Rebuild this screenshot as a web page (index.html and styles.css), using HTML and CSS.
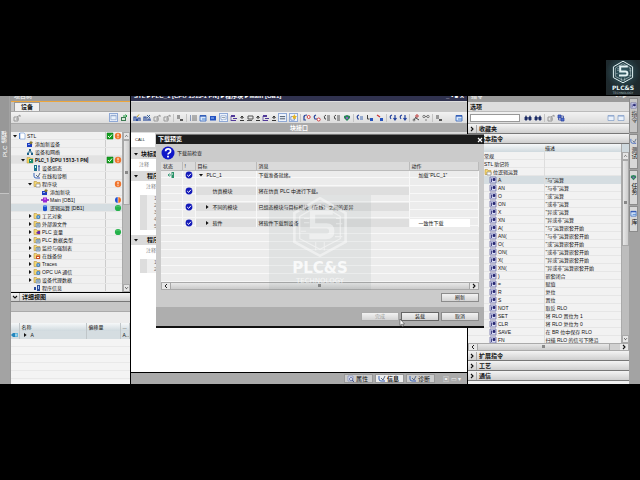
FILE: index.html
```html
<!DOCTYPE html>
<html lang="zh-CN">
<head>
<meta charset="utf-8">
<title>PLC 编程</title>
<link rel="stylesheet" href="styles.css">
</head>
<body>
<svg class="defs" aria-hidden="true">
  <symbol id="arrow-d" viewBox="0 0 6 6"><path d="M1 2h4L3 4.6z" fill="#111"/></symbol>
  <symbol id="arrow-r" viewBox="0 0 6 6"><path d="M2 1v4l2.6-2z" fill="#111"/></symbol>
  <symbol id="chev-r" viewBox="0 0 6 6"><path d="M2 1l2 2-2 2" fill="none" stroke="#111" stroke-width="1.1"/></symbol>
  <symbol id="chev-l" viewBox="0 0 6 6"><path d="M4 1L2 3l2 2" fill="none" stroke="#222"/></symbol>
  <symbol id="chev-d" viewBox="0 0 6 6"><path d="M1 2l2 2 2-2" fill="none" stroke="#111" stroke-width="1.1"/></symbol>
  <symbol id="chev-u" viewBox="0 0 6 6"><path d="M1 4l2-2 2 2" fill="none" stroke="#333"/></symbol>
  <symbol id="ok" viewBox="0 0 8 8"><path d="M1 1h6v6H1z" fill="#14a01e" stroke="#0b7614" stroke-width=".5"/><path d="M2 4l1.5 1.6L6 2.5" fill="none" stroke="#fff"/></symbol>
  <symbol id="warn" viewBox="0 0 8 8"><circle cx="4" cy="4" r="3.2" fill="#f0742c"/><path d="M4 1.8v2.6M4 5.2v1" stroke="#fff"/></symbol>
  <symbol id="green" viewBox="0 0 8 8"><circle cx="4" cy="4" r="3.1" fill="#25b24b"/><path d="M2 3q2-2 4 0" stroke="#6bd585" fill="none" stroke-width=".6"/></symbol>
  <symbol id="half" viewBox="0 0 8 8"><path d="M4 1a3 3 0 0 0 0 6z" fill="#2050d0"/><path d="M4 1a3 3 0 0 1 0 6z" fill="#f07022"/><path d="M4 1v6" stroke="#fff" stroke-width=".6"/></symbol>
  <symbol id="doc" viewBox="0 0 8 8"><path d="M2 1h4l1 1v5H2z" fill="#fff" stroke="#7ea2d8" stroke-width=".7"/><path d="M1.5 1v6" stroke="#5a88cc"/></symbol>
  <symbol id="addnew" viewBox="0 0 8 8"><path d="M1 3h5v4H1z" fill="#1c3cc0"/><path d="M2 4h2v1H2z" fill="#8fb0ff"/><path d="M5 .5l.6 1.3 1.5.2-1 1 .2 1.4L5 3.8 3.8 4.400 4 3l-1-1 1.400-.2z" fill="#8a7a34"/></symbol>
  <symbol id="net" viewBox="0 0 8 8"><path d="M3 1h2v2H3zM1 5h2v2H1zM5 5h2v2H5z" fill="#1b6088"/><path d="M4 3v1M2 5V4h4v1" fill="none" stroke="#1b6088" stroke-width=".8"/></symbol>
  <symbol id="plc" viewBox="0 0 8 8"><path d="M1 1.500h3l.5 1H7v4.500H1z" fill="#f0d060" stroke="#b99a3a" stroke-width=".5"/><path d="M3 3h4v4H3z" fill="#1b8c70"/><path d="M4 4h1v1H4z" fill="#fff"/></symbol>
  <symbol id="conf" viewBox="0 0 8 8"><path d="M1 1h3v6H1z" fill="#1b708c"/><path d="M2 2h1v2H2z" fill="#bfe"/><path d="M5 2h2M6 2v5" stroke="#28489b"/></symbol>
  <symbol id="diag" viewBox="0 0 8 8"><path d="M1 1v3q0 2 2 2h2" fill="none" stroke="#3c68bb"/><path d="M3 3l2 2 2-4" fill="none" stroke="#596b88"/><path d="M5 6h2" stroke="#3753bb"/></symbol>
  <symbol id="folder" viewBox="0 0 8 8"><path d="M1 1.500h2.500l.5 1h3V6.500H1z" fill="#f5d873" stroke="#b7923c" stroke-width=".6"/></symbol>
  <symbol id="f-block" viewBox="0 0 8 8"><use href="#folder"/><path d="M3 4h4v3H3z" fill="#fff" stroke="#777" stroke-width=".6"/></symbol>
  <symbol id="f-blue" viewBox="0 0 8 8"><use href="#folder"/><circle cx="5.200" cy="5" r="2" fill="#3c82c8"/><circle cx="5.200" cy="5" r=".7" fill="#def"/></symbol>
  <symbol id="f-purple" viewBox="0 0 8 8"><use href="#folder"/><path d="M3 5l2-2h2v3H5z" fill="#6728a8"/></symbol>
  <symbol id="f-grey" viewBox="0 0 8 8"><use href="#folder"/><path d="M3 3.500h4V7H3z" fill="#b8cadb" stroke="#57789a" stroke-width=".6"/><path d="M4 5h2" stroke="#385f80" stroke-width=".6"/></symbol>
  <symbol id="f-red" viewBox="0 0 8 8"><use href="#folder"/><path d="M3 3.500h4V7H3z" fill="#c8522a"/><path d="M4 5h2v1H4z" fill="#fff"/></symbol>
  <symbol id="ob" viewBox="0 0 8 8"><path d="M0 4h8" stroke="#7c18b5" stroke-width="1.500"/><path d="M2 1.500h4v5H2z" fill="#9a24d4"/><path d="M3 3h2" stroke="#e0a5f5"/></symbol>
  <symbol id="db" viewBox="0 0 8 8"><path d="M2 2q2-2 4 0v4.500q-2 1.300-4 0z" fill="#1d4fce"/><ellipse cx="4" cy="2" rx="2" ry=".8" fill="#83a9f6"/></symbol>
  <symbol id="info" viewBox="0 0 8 8"><path d="M1 3h2v3H1zM4 1h3v6H4z" fill="#2a4b9a"/><path d="M5 2h1v3H5z" fill="#a8c8f3"/></symbol>
  <symbol id="tag" viewBox="0 0 8 8"><path d="M0 4l2-2h5v4H2z" fill="#2486bd"/><path d="M4 2h3v4H4z" fill="#65b7dc"/><path d="M5 3v2" stroke="#fff" stroke-width=".7"/></symbol>
  <symbol id="inst" viewBox="0 0 8 8"><path d="M1 1h6v6H1z" fill="#dde0f5" stroke="#5c5c9c" stroke-width=".7"/><path d="M2.500 6V2.500M4 2.500h2v2H4z" fill="#272772" stroke="#272772" stroke-width=".8"/></symbol>
  <symbol id="check" viewBox="0 0 8 8"><circle cx="4" cy="4" r="3.400" fill="#151bb9"/><path d="M2.200 4l1.400 1.400L6 2.700" stroke="#fff" fill="none"/></symbol>
  <symbol id="load" viewBox="0 0 8 8"><path d="M4.500 1H7v6H4.500z" fill="#2a9268"/><path d="M1 4h3M2.500 2.500L1 4l1.500 1.500" fill="none" stroke="#44a180"/><path d="M5 3h1" stroke="#fff"/></symbol>
  <symbol id="t-out" viewBox="0 0 8 8"><path d="M1 3h5v4H1z" fill="#3d7b52"/><path d="M2 4h3v2H2z" fill="#d5e8d8"/><path d="M3 2h4M5.500 .5L7 2 5.500 3.500" fill="none" stroke="#1f9c3f"/></symbol>
  <symbol id="t-db" viewBox="0 0 8 8"><path d="M1 7V3h2v4M5 7V4h2v3M4 7V5" stroke="#2c4d9b" fill="none" stroke-width="1.200"/><path d="M4 3l2-2.500" stroke="#bb9a20"/></symbol>
  <symbol id="t-x" viewBox="0 0 8 8"><path d="M1 7V3h2v4M5 7V5h2v2" stroke="#2c4d9b" fill="none" stroke-width="1.200"/><path d="M4 1l3 3M7 1L4 4" stroke="#285593" stroke-width=".9"/></symbol>
  <symbol id="t-dim" viewBox="0 0 8 8"><path d="M1 3h4v4H1zM3 5h3M4 3l3-2v2" fill="none" stroke="#999"/></symbol>
  <symbol id="t-copy" viewBox="0 0 8 8"><path d="M1 1h3v4H1z" fill="#999"/><path d="M4 5h3v2H4z" fill="#555"/></symbol>
  <symbol id="t-lines" viewBox="0 0 8 8"><path d="M1 2h1M1 4h1M1 6h1" stroke="#2c4d8b"/><path d="M3 2h5M3 4h5M3 6h5" stroke="#555" stroke-width=".8"/></symbol>
  <symbol id="t-win" viewBox="0 0 8 8"><path d="M1 1.500h6v5.500H1z" fill="#d7e7fb" stroke="#3063bb" stroke-width=".8"/><path d="M1 2h6" stroke="#234cae" stroke-width="1.200"/><path d="M3 5h4" stroke="#4c83cc"/></symbol>
  <symbol id="t-pane" viewBox="0 0 8 8"><path d="M1 1.500h6v5H1z" fill="#e9f1fb" stroke="#8ba4cc" stroke-width=".8"/><path d="M1 2h6" stroke="#8ba4cc"/></symbol>
  <symbol id="t-fill" viewBox="0 0 8 8"><path d="M1 2h6v4.500H1z" fill="#2352c0"/><path d="M2 4h3" stroke="#9fc0ff"/></symbol>
  <symbol id="t-bubble" viewBox="0 0 8 8"><path d="M1 2h6v4H4L2 7V6H1z" fill="#fff" stroke="#698cc0" stroke-width=".7"/><path d="M2 4h4" stroke="#89a"/></symbol>
  <symbol id="t-var" viewBox="0 0 8 8"><path d="M1 1h4v2H1zM3 4h4v1H3zM1 6h5v1H1z" fill="#513999"/><path d="M1 2v5" stroke="#513999" stroke-width=".7"/></symbol>
  <symbol id="t-mon" viewBox="0 0 8 8"><path d="M2 2h5v3H2zM1 6.500h5" fill="none" stroke="#555"/></symbol>
  <symbol id="t-up" viewBox="0 0 4 8"><path d="M2 2v3M.5 4L2 2l1.500 2M0 6.500h4" fill="none" stroke="#222" stroke-width=".9"/></symbol>
  <symbol id="t-eq" viewBox="0 0 8 8"><path d="M1 3h6M1 5.500h6" stroke="#345"/></symbol>
  <symbol id="t-star" viewBox="0 0 8 8"><path d="M1 3h4v4H1z" fill="#fff" stroke="#345fa8" stroke-width=".7"/><path d="M5 0l.8 2L8 2.500 6.500 4l.2 2L5 5l-2 .8L3.500 4 2 2.500 4.200 2z" fill="#e4b323"/></symbol>
  <symbol id="t-red" viewBox="0 0 8 8"><path d="M1 3q0-2 3-2M1 2v4h2" fill="none" stroke="#223f99" stroke-width="1.200"/><circle cx="5.700" cy="3" r="1.500" fill="#fff" stroke="#cf3030" stroke-width=".9"/></symbol>
  <symbol id="t-red2" viewBox="0 0 8 8"><path d="M3 1Q0 2 2 5h2" fill="none" stroke="#223f99" stroke-width="1.200"/><circle cx="5.700" cy="5.500" r="1.500" fill="#fff" stroke="#cf3030" stroke-width=".9"/></symbol>
  <symbol id="t-call" viewBox="0 0 8 8"><path d="M3 1Q0 2 2 5h1" fill="none" stroke="#444"/><path d="M4 2h3M4 4h3M4 6h3" stroke="#555"/></symbol>
  <symbol id="t-shield" viewBox="0 0 8 8"><path d="M1 2l3-1 3 1v2L4 7 1 4z" fill="#29855a"/><path d="M3 3h2v2H3z" fill="#86b"/></symbol>
  <symbol id="t-step" viewBox="0 0 8 8"><path d="M3 1Q0 2 2 5h1" fill="none" stroke="#223f99" stroke-width="1.200"/><path d="M4 3h3M4 5h3" stroke="#456cb5"/></symbol>
  <symbol id="t-sq" viewBox="0 0 8 8"><path d="M1.500 1v4h2" fill="none" stroke="#444"/><path d="M4 4h3v3H4z" fill="#2754bd"/></symbol>
  <symbol id="t-sqr" viewBox="0 0 8 8"><path d="M1 1l3 2" stroke="#c33" stroke-width="1.300"/><path d="M4 4h3v3H4z" fill="#2754bd"/></symbol>
  <symbol id="t-in" viewBox="0 0 8 8"><path d="M3 1Q0 2 2 5" fill="none" stroke="#223f99" stroke-width="1.200"/><path d="M6 1v4M4.500 4L6 6l1.500-2" stroke="#2142a0" fill="none" stroke-width="1.200"/></symbol>
  <symbol id="t-key" viewBox="0 0 8 8"><circle cx="5" cy="2" r="1.200" fill="none" stroke="#b33"/><path d="M4 3L2 6M4 4l3 2" stroke="#444"/><circle cx="2" cy="6" r="1" fill="none" stroke="#555" stroke-width=".7"/></symbol>
  <symbol id="t-glass" viewBox="0 0 8 8"><circle cx="2" cy="2.500" r="1.200" fill="none" stroke="#555" stroke-width=".7"/><circle cx="6" cy="2.500" r="1.200" fill="none" stroke="#555" stroke-width=".7"/><path d="M3 2.500h2M3 6h2" stroke="#555" stroke-width=".7"/></symbol>
  <symbol id="t-find" viewBox="0 0 8 8"><path d="M1 6V3h2v3zM5 6V3h2v3zM3 4h2M2 3V1.500M6 3V1.500" stroke="#1d2d66" fill="#1d2d66" stroke-width=".9"/></symbol>
  <symbol id="t-prop" viewBox="0 0 8 8"><path d="M1 1h5v5H1z" fill="#e5e8f5" stroke="#7a86b8" stroke-width=".7"/><circle cx="4" cy="4" r="1.500" fill="#fff" stroke="#4c5a94" stroke-width=".8"/><path d="M5 5l2 2" stroke="#4c5a94"/></symbol>
  <symbol id="t-swap" viewBox="0 0 8 8"><path d="M1 1h3v3H1zM4 4h3v3H4z" fill="#506fd0" stroke="#263d98" stroke-width=".7"/><path d="M4 2h2.500v2M1.500 4v2H4" fill="none" stroke="#263d98" stroke-width=".7"/></symbol>
  <symbol id="hexlogo" viewBox="0 0 60 60">
    <path d="M30 3l24 14v27L30 57 6 44V17z" fill="none" stroke="currentColor" stroke-width="2.500"/>
    <path d="M30 9l19 11v21L30 51 11 41V20z" fill="none" stroke="currentColor" stroke-width="1.200"/>
    <path d="M42 16H23v13h13q5 0 5 5t-5 5H20" fill="none" stroke="currentColor" stroke-width="5"/>
    <path d="M15 22h5M15 26h5M12 34h5M45 22h4M45 27h6M44 39h7M26 52v-8M34 52v-8" stroke="currentColor" stroke-width="1"/>
  </symbol>
</svg>

<div class="letterbox">
<main class="app">
  <nav class="rail rail-left"><a class="rail-tab" href="#devices">PLC 编程</a></nav>

  <section class="panel devices" id="devices">
    <header class="cap">项目树</header>
    <div class="tabs"><button class="tab">设备</button></div>
    <div class="tools">
      <svg class="i"><use href="#t-dim"/></svg><span class="grow"></span>
      <svg class="i boxed"><use href="#t-pane"/></svg><svg class="i"><use href="#t-out"/></svg>
    </div>
    <div class="strip"></div>
    <div class="scrolled tree-wrap">
      <ul class="tree">
        <li class="l0"><svg><use href="#arrow-d"/></svg><svg><use href="#doc"/></svg><span>STL</span><svg><use href="#ok"/></svg><svg><use href="#warn"/></svg></li>
        <li class="l1"><i></i><svg><use href="#addnew"/></svg><span>添加新设备</span></li>
        <li class="l1"><i></i><svg><use href="#net"/></svg><span>设备和网络</span></li>
        <li class="l1 shade"><svg><use href="#arrow-d"/></svg><svg><use href="#plc"/></svg><span><b>PLC_1 [CPU 1513-1 PN]</b></span><svg><use href="#ok"/></svg><svg><use href="#warn"/></svg></li>
        <li class="l2"><i></i><svg><use href="#conf"/></svg><span>设备组态</span></li>
        <li class="l2"><i></i><svg><use href="#diag"/></svg><span>在线和诊断</span></li>
        <li class="l2"><svg><use href="#arrow-d"/></svg><svg><use href="#f-block"/></svg><span>程序块</span><svg><use href="#warn"/></svg></li>
        <li class="l3"><i></i><svg><use href="#addnew"/></svg><span>添加新块</span></li>
        <li class="l3"><i></i><svg><use href="#ob"/></svg><span>Main [OB1]</span><svg><use href="#half"/></svg></li>
        <li class="l3 sel"><i></i><svg><use href="#db"/></svg><span>逻辑运算 [DB1]</span><svg><use href="#green"/></svg></li>
        <li class="l2"><svg><use href="#arrow-r"/></svg><svg><use href="#f-blue"/></svg><span>工艺对象</span></li>
        <li class="l2"><svg><use href="#arrow-r"/></svg><svg><use href="#f-grey"/></svg><span>外部源文件</span></li>
        <li class="l2"><svg><use href="#arrow-r"/></svg><svg><use href="#f-purple"/></svg><span>PLC 变量</span><svg><use href="#green"/></svg></li>
        <li class="l2"><svg><use href="#arrow-r"/></svg><svg><use href="#f-grey"/></svg><span>PLC 数据类型</span></li>
        <li class="l2"><svg><use href="#arrow-r"/></svg><svg><use href="#f-grey"/></svg><span>监控与强制表</span></li>
        <li class="l2"><svg><use href="#arrow-r"/></svg><svg><use href="#f-red"/></svg><span>在线备份</span></li>
        <li class="l2"><svg><use href="#arrow-r"/></svg><svg><use href="#f-blue"/></svg><span>Traces</span></li>
        <li class="l2"><svg><use href="#arrow-r"/></svg><svg><use href="#f-blue"/></svg><span>OPC UA 通信</span></li>
        <li class="l2"><svg><use href="#arrow-r"/></svg><svg><use href="#f-grey"/></svg><span>设备代理数据</span></li>
        <li class="l2"><i></i><svg><use href="#info"/></svg><span>程序信息</span></li>
      </ul>
      <div class="vbar"><svg><use href="#chev-u"/></svg><div class="thumb t-tree"></div><svg><use href="#chev-d"/></svg></div>
    </div>
    <h2 class="fold detail-head"><svg><use href="#chev-d"/></svg><span>详细视图</span></h2>
    <div class="strip wide"></div>
    <div class="gap-row"></div>
    <div class="detail">
      <table>
        <colgroup><col class="d1"><col class="d2"><col class="d3"><col></colgroup>
        <thead><tr><th></th><th>名称</th><th>偏移量</th><th>...</th></tr></thead>
        <tbody><tr class="sel"><td><svg><use href="#tag"/></svg></td><td><svg><use href="#arrow-r"/></svg>A</td><td></td><td>A...</td></tr></tbody>
      </table>
    </div>
  </section>

  <section class="panel editor">
    <header class="cap navy"><span>STL ▸ PLC_1 [CPU 1513-1 PN] ▸ 程序块 ▸ Main [OB1]</span><span class="wb">_ ▪ ■ X</span></header>
    <div class="crumb"></div>
    <div class="tools">
      <svg class="i"><use href="#t-db"/></svg><svg class="i"><use href="#t-x"/></svg><svg class="i"><use href="#t-dim"/></svg><svg class="i"><use href="#t-dim"/></svg><hr>
      <svg class="i"><use href="#t-copy"/></svg><hr>
      <svg class="i"><use href="#t-lines"/></svg><svg class="i"><use href="#t-win"/></svg><svg class="i"><use href="#t-fill"/></svg><svg class="i boxed"><use href="#t-bubble"/></svg>
      <svg class="i"><use href="#t-var"/></svg><svg class="n"><use href="#t-up"/></svg><svg class="i"><use href="#t-mon"/></svg><svg class="n"><use href="#t-up"/></svg><svg class="i"><use href="#t-var"/></svg><svg class="n"><use href="#t-up"/></svg>
      <svg class="i boxed"><use href="#t-eq"/></svg><svg class="i boxed"><use href="#t-star"/></svg><hr>
      <svg class="i"><use href="#t-red"/></svg><svg class="i"><use href="#t-red2"/></svg><svg class="i"><use href="#t-call"/></svg><svg class="i"><use href="#t-call"/></svg><svg class="i"><use href="#t-shield"/></svg><hr>
      <svg class="i"><use href="#t-step"/></svg><svg class="i"><use href="#t-sq"/></svg><svg class="i"><use href="#t-sqr"/></svg><hr>
      <svg class="i"><use href="#t-in"/></svg><svg class="i"><use href="#t-in"/></svg><hr>
      <svg class="i"><use href="#t-key"/></svg><svg class="i"><use href="#t-glass"/></svg><hr>
      <svg class="i"><use href="#t-copy"/></svg><span class="grow"></span><svg class="i end"><use href="#t-win"/></svg>
    </div>
    <div class="iface">块接口</div>
    <div class="code">
      <div class="favs"><span>CALL</span></div>
      <h3><svg><use href="#arrow-d"/></svg>块标题：</h3>
      <p>注释</p>
      <h3 class="seg"><svg><use href="#arrow-d"/></svg>程序段 1：</h3>
      <p class="in">注释</p>
      <ol><li>1</li><li>2</li><li>3</li><li>4</li><li>5</li></ol>
      <h3 class="seg"><svg><use href="#arrow-d"/></svg>程序段 2：</h3>
      <p class="in">注释</p>
      <ol><li>1</li><li>2</li></ol>
    </div>
    <footer class="infobar">
      <button><svg><use href="#t-prop"/></svg>属性</button><button class="on"><svg><use href="#diag"/></svg>信息</button><button><svg><use href="#diag"/></svg>诊断</button>
      <span class="mini">▣ ▭ ▾</span>
    </footer>
  </section>

  <section class="panel instr">
    <header class="cap mid"><span>指令</span><span class="wb">▪ ▫ ▸</span></header>
    <div class="opts">选项</div>
    <div class="tools">
      <input type="text" aria-label="搜索指令">
      <svg class="i"><use href="#t-find"/></svg><svg class="i"><use href="#t-find"/></svg><hr><svg class="i"><use href="#t-dim"/></svg><svg class="i"><use href="#t-swap"/></svg>
      <span class="grow"></span><svg class="i"><use href="#t-pane"/></svg><svg class="i end"><use href="#t-pane"/></svg>
    </div>
    <h2 class="fold"><svg><use href="#chev-r"/></svg><span>收藏夹</span></h2>
    <h2 class="fold"><svg><use href="#chev-d"/></svg><span>基本指令</span></h2>
    <div class="scrolled inst-wrap">
      <div class="inst-list">
      <table>
        <colgroup><col class="n1"><col></colgroup>
        <thead><tr><th></th><th>描述</th></tr></thead>
        <tbody>
        <tr><td class="grp">常规</td><td></td></tr>
        <tr><td class="grp">STL 助记符</td><td></td></tr>
        <tr><td class="grp"><svg><use href="#f-block"/></svg>位逻辑运算</td><td></td></tr>
        <tr class="sel"><td><svg><use href="#inst"/></svg>A</td><td>"与"运算</td></tr>
        <tr><td><svg><use href="#inst"/></svg>AN</td><td>"与非"运算</td></tr>
        <tr><td><svg><use href="#inst"/></svg>O</td><td>"或"运算</td></tr>
        <tr><td><svg><use href="#inst"/></svg>ON</td><td>"或非"运算</td></tr>
        <tr><td><svg><use href="#inst"/></svg>X</td><td>"异或"运算</td></tr>
        <tr><td><svg><use href="#inst"/></svg>XN</td><td>"异或非"运算</td></tr>
        <tr><td><svg><use href="#inst"/></svg>A(</td><td>"与"运算嵌套开始</td></tr>
        <tr><td><svg><use href="#inst"/></svg>AN(</td><td>"与非"运算嵌套开始</td></tr>
        <tr><td><svg><use href="#inst"/></svg>O(</td><td>"或"运算嵌套开始</td></tr>
        <tr><td><svg><use href="#inst"/></svg>ON(</td><td>"或非"运算嵌套开始</td></tr>
        <tr><td><svg><use href="#inst"/></svg>X(</td><td>"异或"运算嵌套开始</td></tr>
        <tr><td><svg><use href="#inst"/></svg>XN(</td><td>"异或非"运算嵌套开始</td></tr>
        <tr><td><svg><use href="#inst"/></svg>)</td><td>嵌套闭合</td></tr>
        <tr><td><svg><use href="#inst"/></svg>=</td><td>赋值</td></tr>
        <tr><td><svg><use href="#inst"/></svg>R</td><td>复位</td></tr>
        <tr><td><svg><use href="#inst"/></svg>S</td><td>置位</td></tr>
        <tr><td><svg><use href="#inst"/></svg>NOT</td><td>取反 RLO</td></tr>
        <tr><td><svg><use href="#inst"/></svg>SET</td><td>将 RLO 置位为 1</td></tr>
        <tr><td><svg><use href="#inst"/></svg>CLR</td><td>将 RLO 复位为 0</td></tr>
        <tr><td><svg><use href="#inst"/></svg>SAVE</td><td>在 BR 位中保存 RLO</td></tr>
        <tr><td><svg><use href="#inst"/></svg>FN</td><td>扫描 RLO 的信号下降沿</td></tr>
        </tbody>
      </table>
      </div>
      <div class="vbar"><span class="head"></span><svg><use href="#chev-u"/></svg><div class="thumb t-inst"></div><span class="grow"></span><svg><use href="#chev-d"/></svg></div>
    </div>
    <div class="hbar inst-h"><svg><use href="#chev-l"/></svg><div class="thumb"></div><svg><use href="#chev-r"/></svg></div>
    <h2 class="fold tall"><svg><use href="#chev-r"/></svg><span>扩展指令</span></h2>
    <h2 class="fold tall"><svg><use href="#chev-r"/></svg><span>工艺</span></h2>
    <h2 class="fold tall"><svg><use href="#chev-r"/></svg><span>通信</span></h2>
  </section>

  <nav class="rail rail-right">
    <a href="#r1" class="dim"><svg><use href="#inst"/></svg>指令</a>
    <a href="#r2"><svg><use href="#diag"/></svg>测试</a>
    <a href="#r3"><svg><use href="#t-shield"/></svg>任务</a>
    <a href="#r4"><svg><use href="#t-win"/></svg>库</a>
  </nav>

  <section class="dialog" role="dialog" aria-label="下载预览">
    <header><span>下载预览</span><button aria-label="关闭"><svg viewBox="0 0 6 6"><path d="M1 1l4 4M5 1L1 5" stroke="#fff" stroke-width="1.200"/></svg></button></header>
    <div class="dlg-body">
      <div class="ask">
        <svg class="big" viewBox="0 0 14 14"><circle cx="7" cy="7" r="6.500" fill="#1016c8"/><path d="M4.600 5.300q0-2.500 2.500-2.500t2.500 2.200q0 1.400-1.500 2-1 .4-1 1.600" fill="none" stroke="#fff" stroke-width="1.700"/><path d="M6.100 9.800h1.800v1.700H6.100z" fill="#fff"/></svg>
        <span>下载前检查</span>
      </div>
      <div class="preview">
        <table>
          <colgroup><col class="p1"><col class="p2"><col class="p3"><col class="p4"><col></colgroup>
          <thead><tr><th>状态</th><th>!</th><th>目标</th><th>消息</th><th>动作</th></tr></thead>
          <tbody>
          <tr><td class="c"><svg><use href="#load"/></svg></td><td class="c"><svg><use href="#check"/></svg></td><td><svg><use href="#arrow-d"/></svg>PLC_1</td><td>下载准备就绪。</td><td class="act">加载“PLC_1”</td></tr>
          <tr class="gap"><td></td><td></td><td></td><td></td><td></td></tr>
          <tr class="fill"><td></td><td class="c"><svg><use href="#check"/></svg></td><td class="sub">仿真模块</td><td>将在仿真 PLC 中进行下载。</td><td></td></tr>
          <tr class="gap"><td></td><td></td><td></td><td></td><td></td></tr>
          <tr class="fill"><td></td><td class="c"><svg><use href="#check"/></svg></td><td class="node"><svg><use href="#arrow-r"/></svg>不同的模块</td><td>已组态模块与目标模块（在线）之间的差异</td><td></td></tr>
          <tr class="gap"><td></td><td></td><td></td><td></td><td></td></tr>
          <tr class="fill"><td></td><td class="c"><svg><use href="#check"/></svg></td><td class="node"><svg><use href="#arrow-r"/></svg>软件</td><td>将软件下载到设备</td><td class="act"><span>一致性下载</span></td></tr>
          </tbody>
        </table>
        <div class="hbar"><svg><use href="#chev-l"/></svg><div class="thumb"></div><svg><use href="#chev-r"/></svg></div>
      </div>
      <div class="row-btn"><button>刷新</button></div>
    </div>
    <footer><button disabled>完成</button><button class="main">装载</button><button>取消</button></footer>
    <div class="mark"><svg><use href="#hexlogo"/></svg><b>PLC&amp;S</b><small>TECHNOLOGY</small></div>
    <svg class="cursor" viewBox="0 0 6 8"><path d="M1 0v6.500l1.500-1.300L3.500 7.500l1-.5-1-2H5.500z" fill="#fff" stroke="#333" stroke-width=".5"/></svg>
  </section>
</main>
<aside class="brand"><svg><use href="#hexlogo"/></svg><b>PLC&amp;S</b><small>TECHNOLOGY</small></aside>
</div>
</body>
</html>
```
FILE: styles.css
```css
* { box-sizing: border-box; }
body {
  margin: 0;
  background: #000;
  color: #111;
  font: 5px/8px "Liberation Sans", "Noto Sans CJK SC", sans-serif;
}
.defs { position: absolute; width: 0; height: 0; }
svg { display: block; width: 8px; height: 8px; flex: none; }
h2, h3, p, ul, ol { margin: 0; padding: 0; list-style: none; }
button { font: inherit; color: inherit; padding: 0; border: 0; background: none; }
a { color: inherit; text-decoration: none; }
table { width: 100%; table-layout: fixed; border-collapse: collapse; }
th, td { padding: 0; height: 8px; text-align: left; font-weight: 400; white-space: nowrap; overflow: hidden; }
td svg { display: inline-block; vertical-align: top; }
.grow { flex: 1; }

.letterbox { position: relative; height: 100vh; padding: 96px 0; }
.app {
  position: relative;
  height: 100%;
  display: grid;
  grid-template-columns: 10px 119px minmax(0, 1fr) 161px 10px;
  column-gap: 1px;
  background: #000;
}
.panel { display: flex; flex-direction: column; min-width: 0; overflow: hidden; background: #f0f0f0; }

/* side rails */
.rail { background: #a3a3a3; overflow: hidden; }
.rail-left { margin-right: -1px; border-right: 1px solid #999; }
.rail-tab {
  display: flex; align-items: center; justify-content: center;
  height: 98px; width: 9px;
  background: #989898; border-top: 1px solid #c4c4c4;
  color: #fff; font-size: 6px;
  writing-mode: vertical-rl; transform: rotate(180deg);
}
.rail-right { display: flex; flex-direction: column; gap: 1px; padding-top: 2px; margin-left: -1px; }
.rail-right a {
  display: flex; align-items: center; gap: 2px;
  height: 35px; width: 9px; padding-top: 3px;
  background: #d8d8d8; border: 1px solid #8b8b8b; overflow: hidden;
  writing-mode: vertical-rl; line-height: 7px; font-size: 6px;
}
.rail-right a svg { width: 7px; height: 7px; }
.rail-right a:last-child { height: 26px; }
.rail-right .dim { color: #444; background: #c6c6c6; }

/* shared bars */
.cap { display: flex; justify-content: space-between; flex: none; height: 6px; padding: 0 3px; overflow: hidden; background: #9b9b9b; color: #e8e8e8; font-size: 6px; line-height: 1px; font-weight: 700; white-space: nowrap; }
.devices .cap { border-bottom: 1px solid #eca63c; }
.navy { background: #30324f; border-bottom: 1px solid #ddd; color: #fff; }
.tools { display: flex; align-items: center; flex: none; gap: 2px; height: 12px; padding: 0 2px; background: linear-gradient(#f2f2f2, #dcdcdc); border-bottom: 1px solid #aaa; }
.tools hr { width: 1px; height: 8px; margin: 0; border: 0; background: #c4c4c4; flex: none; }
.tools .n { width: 4px; }
.tools .end { margin-right: 2px; }
.boxed { background: #edf3fc; outline: 1px solid #8fa9d6; }
.tools .boxed { outline-offset: -1px; width: 9px; height: 9px; padding: 1px; }
.fold { display: flex; align-items: center; flex: none; height: 10px; font-size: 6px; line-height: 8px; background: linear-gradient(#f4f4f4, #cfcfcf); border-bottom: 1px solid #777; }
.fold svg { width: 8px; height: 6px; }
.fold span { padding-left: 2px; border-left: 1px solid #aaa; }
.strip { flex: none; height: 8px; background: #bdbdbd; }
.strip.wide { height: 10px; background: #c6c6c6; border-bottom: 1px solid #aaa; }
.scrolled { display: flex; flex: none; min-height: 0; }
.sel { background: #d5dde1; }
.vbar { display: flex; flex-direction: column; flex: none; width: 8px; background: #bdbdbd; border-left: 1px solid #aaa; }
.vbar svg { width: 7px; height: 8px; padding: 1px 0; background: #e6e6e6; border: 1px solid #aaa; }
.thumb { position: relative; flex: 1; background: linear-gradient(90deg, #e8e8e8, #cdcdcd); border: 1px solid #a8a8a8; }
.thumb::after { content: ""; position: absolute; left: 50%; top: 50%; width: 3px; height: 3px; margin: -2px; background: #888; }
.t-tree { flex: none; height: 65px; }
.t-tree + svg { margin-top: auto; }
.t-inst { flex: none; height: 86px; }
.hbar { display: flex; flex: none; height: 8px; background: #d0d0d0; border: 1px solid #aaa; }
.hbar svg { width: 8px; height: 6px; background: #e8e8e8; }
.hbar .thumb { background: linear-gradient(#e8e8e8, #cbcbcb); border-width: 0 1px; }
.inst-h .thumb { margin-right: 10px; }

/* project tree */
.tabs { display: flex; align-items: flex-end; flex: none; height: 10px; padding-left: 3px; background: #c2c2c2; border-bottom: 1px solid #aaa; }
.tab { width: 26px; height: 9px; background: #f0f0f0; border: 1px solid #999; border-bottom: 0; font: 700 6px/8px "Noto Sans CJK SC", sans-serif; }
.tree-wrap { border-bottom: 1px solid #000; }
.tree { flex: 1; min-width: 0; background: linear-gradient(90deg, transparent 94px, #ccc 94px, #ccc 95px, transparent 95px); }
.tree li { display: flex; align-items: center; height: 8px; white-space: nowrap; border-bottom: 1px solid #e6e6e6; }
.tree li > :first-child { width: 6px; height: 6px; }
.tree li span { flex: 1; padding-left: 1px; }
.tree b { font-family: Roboto, sans-serif; }
.l0 { padding-left: 1px; }
.l1 { padding-left: 9px; }
.l2 { padding-left: 16px; }
.l3 { padding-left: 24px; }
.shade { background: #e2e2e2; }
.fold.detail-head { height: 9px; }
.gap-row { flex: none; height: 11px; background: #ececec; }
.detail { flex: 1; background: repeating-linear-gradient(#f4f4f4 0 7px, #e9e9e9 7px 8px); }
.detail thead, .inst-list thead { background: linear-gradient(#f6f8f9, #cfd9de); }
.detail th, .detail td { border-right: 1px solid #c0c6c9; padding-left: 2px; }
.detail th:first-child, .detail td:first-child { padding: 0; }
.detail td + td svg { width: 6px; margin-right: 3px; padding: 1px 0; }
.d1 { width: 8px; }
.d2 { width: 67px; }
.d3 { width: 34px; }

/* block editor */
.editor { background: #fff; }
.crumb { flex: none; height: 10px; background: #c6c6c6; }
.iface { flex: none; height: 9px; background: #a9a9a9; border-bottom: 1px solid #ddd; color: #fff; font: 700 6px/8px "Noto Sans CJK SC", sans-serif; text-align: center; }
.code { flex: 1; overflow: hidden; }
.favs { height: 16px; background: #d2d2d2; }
.favs span { display: block; width: 24px; height: 14px; padding-left: 4px; background: #fff; font-size: 4px; line-height: 14px; }
.code h3 { display: flex; align-items: center; height: 10px; margin-bottom: 1px; padding-left: 1px; background: #dadada; font-size: 6px; }
.code h3 svg { height: 6px; margin-right: 1px; }
.code .seg svg { margin-right: 7px; }
.code p { padding: 0 0 3px 8px; color: #888; }
.code .in { padding-left: 15px; padding-bottom: 5px; }
.code ol { width: 140px; margin: 0 0 5px 9px; padding-left: 14px; color: #777; line-height: 7px; background: linear-gradient(90deg, #ddd 7px, #efefef 7px); }
.infobar { display: flex; align-items: flex-end; justify-content: flex-end; gap: 2px; flex: none; height: 12px; background: #aaa; border-top: 1px solid #000; padding-right: 2px; }
.infobar button { display: flex; align-items: center; gap: 1px; width: 29px; height: 9px; margin-bottom: 1px; padding-left: 2px; background: #ccc; border: 1px solid #999; font-size: 6px; }
.infobar .on { font-weight: 700; background: #eee; }
.mini { width: 28px; padding-left: 6px; color: #f0f0f0; font-size: 6px; line-height: 10px; }

/* instructions */
.opts { flex: none; height: 10px; padding-left: 2px; background: #dedede; border-bottom: 1px solid #bbb; font: 700 6px/9px "Noto Sans CJK SC", sans-serif; }
.instr .tools input { width: 50px; height: 8px; margin-right: 2px; padding: 0 1px; border: 1px solid #999; background: #fff; font: inherit; }
.inst-wrap { flex: 1; }
.inst-list { flex: 1; min-width: 0; overflow: hidden; background: repeating-linear-gradient(#f2f2f2 0 7px, #e6e6e6 7px 8px); }
.n1 { width: 76px; }
.inst-list td:first-child { padding-left: 21px; border-right: 1px solid #ddd; }
.inst-list td.grp { padding-left: 16px; }
.inst-list td svg { margin-right: 1px; }
.inst-list td:first-child svg { height: 8px; }
.inst-list td + td, .inst-list th + th { padding-left: 1px; }
.head { height: 8px; background: #cfd9de; }
.tall:last-child { margin-bottom: 3px; }

/* download preview */
.dialog { position: absolute; left: 156px; right: 156px; top: 38px; border-top: 1px solid #777; border-bottom: 2px solid #111; background: #cbcbcb; }
.dialog header { display: flex; justify-content: space-between; height: 9px; padding: 0 1px 0 2px; background: #1d1d1d; color: #fff; font: 700 6px/8px "Noto Sans CJK SC", sans-serif; }
.dialog header svg { width: 6px; height: 6px; }
.dlg-body { padding: 0 5px; }
.ask { display: flex; align-items: center; gap: 2px; height: 18px; }
.big { width: 14px; height: 14px; }
.preview { display: flex; flex-direction: column; height: 128px; background: repeating-linear-gradient(#ececec 0 7px, #f8f8f8 7px 8px); }
.preview .hbar { margin-top: auto; }
.p1 { width: 21px; }
.p2 { width: 13px; }
.p3 { width: 61px; }
.p4 { width: 153px; }
.preview thead { background: #dadada; }
.preview th { border-right: 1px solid #bbb; border-bottom: 1px solid #bbb; padding-left: 2px; }
.preview td { border-right: 1px solid #f8f8f8; padding-left: 2px; }
.preview .c { text-align: center; padding: 0; }
.preview td + td + td svg { width: 6px; margin-right: 3px; padding: 1px 0; }
.fill td:nth-child(3), .fill td:nth-child(4) { background: #dedede; }
.preview td.sub { padding-left: 17px; }
.preview td.node { padding-left: 8px; }
.preview td.act { padding-left: 9px; }
.fill td.act { padding: 0 8px 0 0; }
.fill .act span { display: block; padding-left: 9px; background: #fff; }
.row-btn { display: flex; justify-content: flex-end; height: 17px; padding-top: 3px; }
.dialog footer { display: flex; justify-content: flex-end; gap: 2px; height: 19px; padding: 5px 5px 0 0; background: #aeaeae; }
.row-btn button, .dialog footer button { width: 38px; height: 9px; background: linear-gradient(#f2f2f2, #d4d4d4); border: 1px solid #8c8c8c; line-height: 7px; }
.dialog footer .main { border-color: #666; }
.dialog footer button:disabled { color: #999; border-color: #aaa; }
.mark { position: absolute; left: 113px; top: 60px; width: 102px; height: 95px; display: flex; flex-direction: column; align-items: center; background: rgba(120, 135, 135, 0.1); color: #fff; font-family: "DejaVu Sans", sans-serif; }
.mark svg { width: 64px; height: 64px; opacity: 0.45; }
.mark b { font-size: 15px; line-height: 18px; opacity: 0.8; }
.mark small { font-size: 7px; line-height: 9px; opacity: 0.7; }
.cursor { position: absolute; left: 243px; bottom: -1px; width: 6px; height: 8px; }

/* channel logo */
.brand { position: absolute; right: 0; top: 60px; width: 34px; height: 35px; display: flex; flex-direction: column; align-items: center; background: radial-gradient(circle at 50% 35%, #35606a, #1e2a2e 60%, #20272a); color: #e4f3f5; font-family: "DejaVu Sans", sans-serif; }
.brand svg { width: 24px; height: 24px; }
.brand b { font-size: 6px; line-height: 7px; }
.brand small { font-size: 3px; line-height: 4px; color: #9fb5b8; }
```
